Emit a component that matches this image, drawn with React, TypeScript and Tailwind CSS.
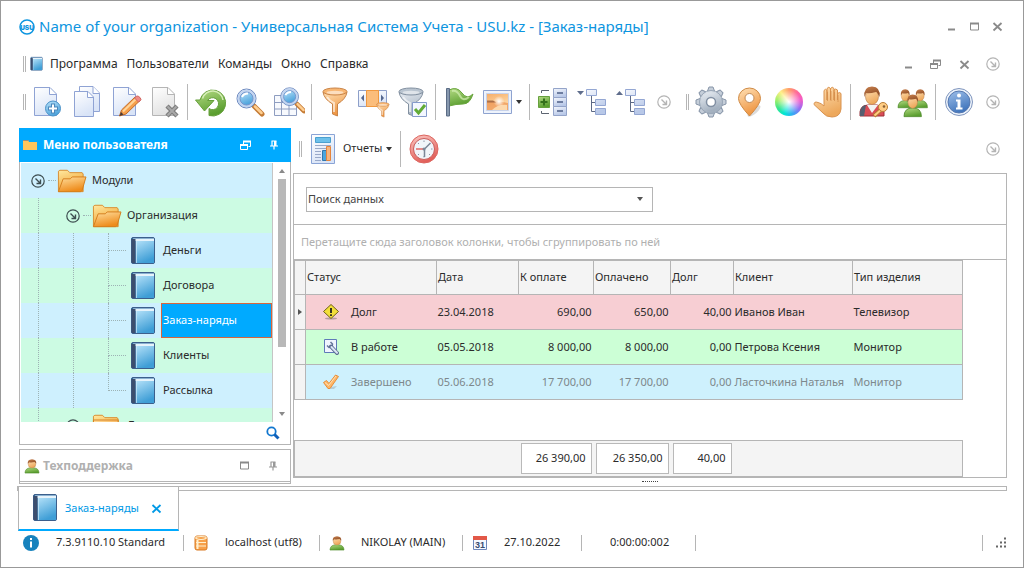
import type { ReactNode } from "react";

type IconProps = { className?: string };

/* Gradients shared by all the icons */
function IconDefs() {
  const grads: [string, string, string][] = [
    ["paper", "#ffffff", "#d9e4f7"],
    ["grayPaper", "#ffffff", "#e2e2e2"],
    ["plus", "#b9e2fa", "#4fa5dc"],
    ["green", "#b5db85", "#5a9e2f"],
    ["orange", "#ffe2b8", "#ee9440"],
    ["folderBack", "#ffe9a0", "#f0a030"],
    ["folderFront", "#ffe0a0", "#ee8c1c"],
    ["book", "#b2e0f8", "#3f9ed6"],
    ["steel", "#e8edf3", "#a3b0bf"],
    ["blue", "#9fc0ea", "#4377bd"],
    ["skin", "#ffe0b4", "#eda85c"],
    ["hair", "#c98250", "#8c4a22"],
    ["red", "#fcc9c4", "#e2605a"],
    ["glass", "#e8f4fd", "#a6d2f4"],
    ["sunset", "#f6ad68", "#ffe0b0"],
    ["node", "#f4f7fd", "#b8c8e8"],
  ];
  return (
    <svg width="0" height="0" className="absolute" aria-hidden="true">
      <defs>
        {grads.map(([id, from, to]) => (
          <linearGradient key={id} id={id} x1="0" y1="0" x2="0.4" y2="1">
            <stop offset="0" stopColor={from} />
            <stop offset="1" stopColor={to} />
          </linearGradient>
        ))}
        <radialGradient id="white">
          <stop offset="0" stopColor="#fff" />
          <stop offset="1" stopColor="#fff" stopOpacity="0" />
        </radialGradient>
      </defs>
    </svg>
  );
}

function Svg({ className = "size-8", box = 32, children }: IconProps & { box?: number; children: ReactNode }) {
  return (
    <svg viewBox={`0 0 ${box} ${box}`} className={`shrink-0 ${className}`} fill="none" aria-hidden="true">
      {children}
    </svg>
  );
}

const Page = ({ fill = "url(#paper)", stroke = "#8fa3d4" }) => (
  <>
    <path d="M3.5 1.500H19L25.500 8V29.500H3.500Z" fill={fill} stroke={stroke} />
    <path d="M18.500 2V8.500H25" fill="#fff" stroke={stroke} />
  </>
);

const NewIcon = () => (
  <Svg>
    <g transform="translate(-1 0)">
      <Page />
    </g>
    <circle cx="21" cy="22.500" r="7.500" fill="url(#plus)" stroke="#4b92c8" />
    <path d="M21 17.500V27.500M16 22.500H26" stroke="#4b86ba" strokeWidth="4" />
    <path d="M21 18.500V26.500M17 22.500H25" stroke="#fff" strokeWidth="2" />
  </Svg>
);

const CopyIcon = () => (
  <Svg>
    <path d="M8.500 .500H22L28.500 7V25.500H8.500Z" fill="url(#paper)" stroke="#8fa3d4" />
    <path d="M22 .500V7.500H28.500" fill="#fff" stroke="#8fa3d4" />
    <path d="M3.500 5.500H17L22.500 11V30.500H3.500Z" fill="url(#paper)" stroke="#8fa3d4" />
    <path d="M16.500 6V11.500H22" fill="#fff" stroke="#8fa3d4" />
  </Svg>
);

const EditIcon = () => (
  <Svg>
    <Page />
    <path d="M9.500 30L11.500 24L25 11L29.500 15L16 28Z" fill="#f6a04c" stroke="#c26c28" />
    <path d="M13 25.500L26.500 12.500" stroke="#ffd59a" strokeWidth="2" />
    <path d="M24.500 12L26.500 10Q28 9.500 30 11.500T30 15L28.500 16Z" fill="#f08a86" stroke="#cf6560" />
    <path d="M9.500 30L11 26L13.500 28.500Z" fill="#4b3b36" />
  </Svg>
);

const DeleteIcon = () => (
  <Svg>
    <Page fill="url(#grayPaper)" stroke="#b5b5b5" />
    <path d="M18 20L28 30M28 20L18 30" stroke="#7e7e7e" strokeWidth="4.500" />
    <path d="M18.500 20.500L27.500 29.500M27.500 20.500L18.500 29.500" stroke="#a9a9a9" strokeWidth="2" />
  </Svg>
);

const RefreshIcon = () => (
  <Svg>
    <path
      d="M5 14A13 13 0 1 1 14 29.500V22.500A6 6 0 1 0 12.500 14.500H19L9.500 25L.500 14Z"
      fill="url(#green)"
      stroke="#67a03c"
      strokeLinejoin="round"
    />
    <path d="M7.500 12.500A10.500 10.500 0 0 1 28 14" stroke="#d7efb8" strokeWidth="1.500" />
  </Svg>
);

const Glass = () => (
  <>
    <path d="M20 20L28 28" stroke="#c57b35" strokeWidth="5" strokeLinecap="round" />
    <path d="M21 20.500L27.500 27" stroke="#ffcf91" strokeWidth="2.500" strokeLinecap="round" />
    <circle cx="12.500" cy="12.500" r="9.500" fill="url(#glass)" stroke="#6b86bd" strokeWidth="1" />
    <circle cx="12.500" cy="12.500" r="8" stroke="#c3d4ef" strokeWidth="2" />
    <circle cx="12.500" cy="12.500" r="6.500" fill="url(#plus)" stroke="#7594cc" />
    <path d="M8 11Q9.500 7.500 14 7.500" stroke="#fff" strokeWidth="2" />
  </>
);

const SearchIcon = () => (
  <Svg>
    <Glass />
  </Svg>
);

const GridSearchIcon = () => (
  <Svg>
    <path d="M1.500 9.500H24.500V29.500H1.500Z" fill="#f7f9fd" />
    <path d="M1.500 9.500V29.500H23.500V18M1.500 16.500H24M1.500 23H24M8.500 9.500V29.500M16 9.500V29.500M1.500 9.500H8" stroke="#8e9dc0" />
    <g transform="translate(5 -1) scale(.93)">
      <Glass />
    </g>
  </Svg>
);

const Funnel = ({ fill = "url(#orange)", stroke = "#c98448", rim = "#f8b672" }) => (
  <>
    <path d="M4 6Q5 13 13.500 18V28L18.500 30V18Q27 13 28 6Z" fill={fill} stroke={stroke} />
    <ellipse cx="16" cy="5.500" rx="12" ry="3.500" fill={rim} stroke={stroke} />
    <ellipse cx="16" cy="6.500" rx="8.500" ry="1.800" fill="#fff" opacity=".55" />
    <path d="M8 11Q11 15.500 15 17V26" stroke="#fff" opacity=".6" strokeWidth="2" />
  </>
);

const FilterIcon = () => (
  <Svg>
    <Funnel />
  </Svg>
);

const ColumnFilterIcon = () => (
  <Svg>
    <path d="M.500 4.500H28.500V20.500H.500Z" fill="url(#paper)" stroke="#8d9fc9" />
    <path d="M8.500 4.500H20.500V20.500H8.500Z" fill="#fbbd7b" stroke="#f1993f" />
    <path d="M6 8.500V15.500L3 12ZM23 8.500V15.500L26 12Z" fill="#54678f" />
    <g transform="translate(16.500 15.500) scale(.52)">
      <Funnel />
    </g>
  </Svg>
);

const FilterCheckIcon = () => (
  <Svg>
    <g transform="translate(-2 0)">
      <Funnel fill="url(#steel)" stroke="#8290a0" rim="#b9c4d0" />
    </g>
    <path d="M15.500 16.500H29.500V30.500H15.500Z" fill="#f3f7ff" stroke="#859bcb" />
    <path d="M18 23L21.500 27L28 19" stroke="#62ab36" strokeWidth="3" />
  </Svg>
);

const FlagIcon = () => (
  <Svg>
    <path d="M6 4Q14 0 19 7T30 8Q27 18 20 18T6 20Z" fill="url(#green)" stroke="#69a53d" />
    <path d="M9 5Q14 4 17 10T26 11" stroke="#d4efb3" strokeWidth="2" opacity=".7" />
    <path d="M3.500 2.500H6.500V30H3.500Z" fill="#8798ae" stroke="#5b6c85" />
  </Svg>
);

const PictureIcon = () => (
  <Svg>
    <path d="M1.500 4.500H29.500V27.500H1.500Z" fill="#eef3fc" stroke="#8ea3d0" />
    <path d="M4.500 7.500H26.500V24.500H4.500Z" fill="url(#sunset)" stroke="#c7d2ea" />
    <path d="M5 16Q14 14 26 17V24H5Z" fill="#ec9350" opacity=".7" />
    <circle cx="17" cy="15.500" r="5.500" fill="url(#white)" />
    <path d="M10 24Q16 18 25 19V24Z" fill="#ffe5bd" opacity=".8" />
    <path d="M5 14.500H11L14 16.500H5Z" fill="#8c5236" opacity=".7" />
  </Svg>
);

const GroupIcon = () => (
  <Svg>
    <path d="M4.500 7V4.500H12M4.500 25V27.500H12" stroke="#5d6471" />
    {[2.5, 11.5, 20.5].map((y) => (
      <g key={y}>
        <path d={`M16.500 ${y}H29.500V${y + 9}H16.500Z`} fill="url(#node)" stroke="#94a4c9" />
        <path d={`M20 ${y + 4.5}H26`} stroke="#4c5e86" strokeWidth="1.500" />
      </g>
    ))}
    <path d="M1.500 10.500H12.500V21.500H1.500Z" fill="url(#green)" stroke="#67a13e" />
    <path d="M7 12.500V19.500M3.500 16H10.500" stroke="#35701c" strokeWidth="2" />
  </Svg>
);

const TreeIcon = ({ up = false }) => (
  <Svg>
    <path d={up ? "M1 9L4.500 5L8 9Z" : "M1 5L4.500 9L8 5Z"} fill="#5f6d8c" />
    <path d="M15.500 9V25.500H20M15.500 16.500H20" stroke="#5d6984" />
    <path d="M10.500 3.500H20.500V9.500H10.500ZM19.500 13.500H29.500V19.500H19.500ZM19.500 22.500H29.500V28.500H19.500Z" fill="url(#node)" stroke="#94a7d3" />
  </Svg>
);

const GearIcon = () => (
  <Svg>
    {Array.from({ length: 8 }, (_, i) => (
      <path
        key={i}
        d="M12.500 5L14 1H18L19.500 5Z"
        transform={`rotate(${i * 45} 16 16)`}
        fill="#c5ced9"
        stroke="#8795a8"
        strokeLinejoin="round"
      />
    ))}
    <circle cx="16" cy="16" r="11.500" fill="url(#steel)" stroke="#9ba8b8" />
    <circle cx="16" cy="16" r="9.500" fill="url(#steel)" />
    <circle cx="16" cy="16" r="4.500" fill="#fff" stroke="#8290a3" strokeWidth="1.500" />
  </Svg>
);

const PinIcon = () => (
  <Svg>
    <ellipse cx="20" cy="25" rx="8" ry="3" fill="#888" opacity=".3" transform="rotate(-40 20 25)" />
    <path d="M15.500 30Q4.500 18 4.500 12.500A11 10.500 0 0 1 26.500 12.500Q26.500 18 15.500 30Z" fill="url(#orange)" stroke="#cf8a45" />
    <circle cx="15.500" cy="12" r="4.500" fill="#fff" stroke="#c28a55" />
  </Svg>
);

const ColorIcon = () => (
  <Svg>
    <foreignObject x="2" y="2" width="28" height="28">
      <div className="size-7 rounded-full bg-[conic-gradient(#ff9c6a,#ff6a9a,#f25ac8,#9a6cf2,#3aa5f5,#00e6d8,#38e68a,#a5f06a,#fff08a,#ff9c6a)]" />
    </foreignObject>
    <circle cx="16" cy="16" r="12" fill="url(#white)" />
  </Svg>
);

const HandIcon = () => (
  <Svg>
    <path
      d="M12 18V4.500Q13.500 2 15 4.500V14V2.500Q16.800 0 18.500 2.500V14V2.500Q20.300 0 22 2.500V14V4Q23.500 2 25.500 4V14V7.500Q27.500 5.500 29 7.500V23Q28 31 20 31Q14 31 11 27L2 18.500Q2 15 6 16.500Q9 17 12 20Z"
      fill="url(#skin)"
      stroke="#d9924f"
    />
    <path d="M15.500 6V15M19 5V15M22.500 6V15M26 9V16" stroke="#d18b49" strokeWidth=".7" />
  </Svg>
);

const UserKeyIcon = () => (
  <Svg>
    <path d="M2 30Q1 19 10 19H19Q27 20 26 30Z" fill="#d94c56" stroke="#9f3038" />
    <path d="M9 19L14 27L20 19Z" fill="#f3f3f3" />
    <path d="M2 30Q1 20 8 19L6 30Z" fill="#565f70" />
    <ellipse cx="14" cy="10.500" rx="6.500" ry="8" fill="url(#skin)" stroke="#b57b47" strokeWidth=".6" />
    <path d="M6.500 11Q5 1 14 .500Q23 1 21.500 11Q19 6 18 6Q11 8 8 7Z" fill="url(#hair)" />
    <path d="M24.500 22.500L16 30" stroke="#b97a30" strokeWidth="4" />
    <path d="M24.500 22.500L16.500 29.500" stroke="#ffcd84" strokeWidth="2" />
    <circle cx="25" cy="21" r="4.500" fill="#ffcd84" stroke="#ba7e38" />
    <circle cx="26" cy="20.500" r="1.300" fill="#8b6036" />
  </Svg>
);

const Person = () => (
  <>
    <path d="M0 26Q0 16 10 16Q20 16 20 26Z" fill="url(#green)" stroke="#4f8c2c" />
    <ellipse cx="10" cy="9.500" rx="5.500" ry="7" fill="url(#skin)" stroke="#b57b47" strokeWidth=".5" />
    <path d="M4 9Q3 1 10 .500Q17 1 16 9L14 5.500Q9 7 6 6Z" fill="url(#hair)" />
  </>
);

const UsersIcon = () => (
  <Svg>
    <g transform="translate(1 3) scale(.72)">
      <Person />
    </g>
    <g transform="translate(16 3) scale(.72)">
      <Person />
    </g>
    <g transform="translate(7 8) scale(.87)">
      <Person />
    </g>
  </Svg>
);

const UserIcon = ({ className = "size-4" }: IconProps) => (
  <Svg className={className}>
    <g transform="translate(2 2) scale(1.400 1.080)">
      <Person />
    </g>
  </Svg>
);

const InfoIcon = () => (
  <Svg>
    <circle cx="16" cy="16" r="13.500" fill="#edf3fb" stroke="#7f95bd" />
    <circle cx="16" cy="16" r="11" fill="url(#blue)" stroke="#5678b0" />
    <circle cx="16" cy="9.500" r="2" fill="#fff" />
    <path d="M13 13.500H17.500V21.500H19.500V23.500H13V21.500H14.500V15.500H13Z" fill="#fff" />
  </Svg>
);

const ReportIcon = () => (
  <Svg>
    <path d="M4.500 1.500H27.500V30.500H4.500Z" fill="url(#paper)" stroke="#8aa4d6" />
    <path d="M8.500 4.500H23.500V9.500H8.500Z" fill="#6cc0ea" stroke="#4ba0cf" />
    <path d="M8 12.500H24M8 15.500H19M8 18.500H14M8 21.500H14M8 24.500H14M8 27.500H14" stroke="#99a9c9" />
    <path d="M15.500 17.500H19.500V27.500H15.500Z" fill="#4aa6dd" stroke="#3177ac" />
    <path d="M19.500 13.500H23.500V27.500H19.500Z" fill="#f7b57c" stroke="#e4843d" />
  </Svg>
);

const ClockIcon = () => (
  <Svg>
    <circle cx="16" cy="16" r="14" fill="url(#red)" stroke="#dc6660" />
    <circle cx="16" cy="16" r="10.500" fill="#f1f5fa" stroke="#c95d5b" />
    <path d="M16 7.500V9M16 23V24.500M23 16H24.500M10 10L11 11M22 22L21 21M10 22L11 21" stroke="#8d98aa" />
    <path d="M8 16H16" stroke="#e26764" strokeWidth="1.500" />
    <path d="M16.500 24V16L22.500 10" stroke="#7b8798" strokeWidth="1.500" />
    <circle cx="16" cy="16" r="1.500" fill="#7b8798" />
  </Svg>
);

const BookIcon = ({ className = "size-8" }: IconProps) => (
  <Svg className={className}>
    <rect x="5.500" y="2.500" width="23" height="26" rx="1.500" fill="#2e6ea6" stroke="#3c5f8c" />
    <path d="M7 3.500H28V6H8Z" fill="#e6f3fb" />
    <path d="M9.500 6H28V28H9.500Z" fill="url(#book)" />
    <path d="M5.500 4H9.500V28H6.500Q5.500 28 5.500 27Z" fill="#3c4e6e" />
    <path d="M10.500 6V28" stroke="#cdeafa" opacity=".7" />
  </Svg>
);

const FolderIcon = ({ closed = false }) => (
  <Svg>
    <g transform="translate(1 1) scale(.95)">
      <path d="M1.500 27V5.500L3 4.500H11L13.500 7H26.500L27.500 8.500V27Z" fill="url(#folderBack)" stroke="#d88b2e" />
      <path
        d={closed ? "M1.500 9.500H27.500V27H1.500Z" : "M1.500 27L6.500 13.500H14L16 11.500H30.500L26.500 25.500L25 27Z"}
        fill="url(#folderFront)"
        stroke="#d47d1c"
      />
    </g>
  </Svg>
);

const ArrowCircle = ({ className = "size-[14px] text-[#b4b4b4]" }: IconProps) => (
  <Svg box={14} className={className}>
    <circle cx="7" cy="7" r="6.200" stroke="currentColor" strokeWidth="1.200" />
    <path d="M4.500 4.500L9 9M9.500 5.500V9.500H5.500" stroke="currentColor" strokeWidth="1.400" />
  </Svg>
);

const MinIcon = () => (
  <Svg box={11} className="size-[11px]">
    <path d="M2 8.500H9" stroke="#8a8a8a" strokeWidth="2" />
  </Svg>
);
const MaxIcon = () => (
  <Svg box={11} className="size-[11px]">
    <path d="M1.500 2V9H9.500V2" stroke="#8a8a8a" />
    <path d="M1 2.500H10" stroke="#8a8a8a" strokeWidth="2" />
  </Svg>
);
const RestoreIcon = ({ className = "size-[11px] text-[#8a8a8a]" }: IconProps) => (
  <Svg box={11} className={className}>
    <path d="M3.500 4V1.500H10.500V6.500H8.500M.500 5V9.500H7.500V5" stroke="currentColor" />
    <path d="M3 1.500H11M0 5H8" stroke="currentColor" strokeWidth="2" />
  </Svg>
);
const CloseIcon = ({ className = "size-[11px] text-[#8a8a8a]" }: IconProps) => (
  <Svg box={11} className={className}>
    <path d="M1.500 2L9.500 9.500M9.500 2L1.500 9.500" stroke="currentColor" strokeWidth="1.800" />
  </Svg>
);
const TackIcon = ({ className = "" }: IconProps) => (
  <Svg box={10} className={`size-[10px] ${className}`}>
    <path d="M2.500 1H7.500M3 1V5.500M1 6H9M5 6V9.500" stroke="currentColor" strokeWidth="1.200" />
    <path d="M5 1H7.500V6H5Z" fill="currentColor" />
  </Svg>
);

const Caret = ({ className = "text-[#333]" }: IconProps) => (
  <svg viewBox="0 0 6 4" className={`h-1 w-[6px] shrink-0 ${className}`} aria-hidden="true">
    <path d="M0 0H6L3 4Z" fill="currentColor" />
  </svg>
);

const Grip = () => <span className="mr-[2px] h-4 w-[3px] shrink-0 border-x border-[#b5b5b5]" />;
const Divider = () => <span className="mx-[3px] h-9 w-px shrink-0 bg-[#b8b8b8]" />;

function Tool({ label, children }: { label: string; children: ReactNode }) {
  return (
    <button aria-label={label} className="flex h-9 w-[39px] shrink-0 items-center justify-center">
      {children}
    </button>
  );
}

const MoreButton = () => (
  <button aria-label="Настроить панель" className="flex h-9 w-7 shrink-0 items-center justify-center">
    <ArrowCircle />
  </button>
);

function TitleBar() {
  return (
    <header className="flex h-[51px] items-center pr-1">
      <Svg className="size-4">
        <circle cx="16" cy="16" r="14" stroke="#0d95e0" strokeWidth="3" />
        <text
          x="16"
          y="21"
          textAnchor="middle"
          fontFamily="Inter, sans-serif"
          fontWeight="900"
          fontSize="13"
          fill="#0d95e0"
        >
          USU
        </text>
      </Svg>
      <h1 className="ml-1 text-[15px] whitespace-nowrap text-[#0d95e0]">
        Name of your organization - Универсальная Система Учета - USU.kz - [Заказ-наряды]
      </h1>
      <div className="ml-auto flex gap-3">
        <button aria-label="Свернуть"><MinIcon /></button>
        <button aria-label="Развернуть"><MaxIcon /></button>
        <button aria-label="Закрыть"><CloseIcon /></button>
      </div>
    </header>
  );
}

function MenuBar() {
  return (
    <nav className="flex h-6 items-center pl-1">
      <Grip />
      <BookIcon className="size-4" />
      <div className="ml-[6px] flex gap-[9px] text-[12px] text-[#2b2b2b]">
        {["Программа", "Пользователи", "Команды", "Окно", "Справка"].map((m) => (
          <button key={m}>{m}</button>
        ))}
      </div>
      <div className="ml-auto flex items-center">
        <button aria-label="Свернуть окно" className="mr-4"><MinIcon /></button>
        <button aria-label="Восстановить окно" className="mr-[18px]"><RestoreIcon /></button>
        <button aria-label="Закрыть окно" className="mr-[9px]"><CloseIcon /></button>
        <MoreButton />
      </div>
    </nav>
  );
}

function Toolbar() {
  return (
    <div className="flex h-[52px] items-center pl-1" role="toolbar">
      <Grip />
      <div className="flex items-center">
        <Tool label="Добавить"><NewIcon /></Tool>
        <Tool label="Копировать"><CopyIcon /></Tool>
        <Tool label="Изменить"><EditIcon /></Tool>
        <Tool label="Удалить"><DeleteIcon /></Tool>
        <Divider />
        <Tool label="Обновить"><RefreshIcon /></Tool>
        <Tool label="Поиск"><SearchIcon /></Tool>
        <Tool label="Поиск в таблице"><GridSearchIcon /></Tool>
        <Divider />
        <Tool label="Фильтр"><FilterIcon /></Tool>
        <Tool label="Фильтр по колонке"><ColumnFilterIcon /></Tool>
        <Tool label="Применить фильтр"><FilterCheckIcon /></Tool>
        <Divider />
        <Tool label="Флаг"><FlagIcon /></Tool>
        <button aria-label="Изображение" className="flex h-9 w-12 items-center gap-[2px] pl-1">
          <PictureIcon />
          <Caret />
        </button>
        <Divider />
        <Tool label="Группировка"><GroupIcon /></Tool>
        <Tool label="Развернуть все"><TreeIcon /></Tool>
        <Tool label="Свернуть все"><TreeIcon up /></Tool>
        <MoreButton />
      </div>
      <div className="ml-2 flex flex-1 items-center">
        <Grip />
        <Tool label="Настройки"><GearIcon /></Tool>
        <Tool label="Карта"><PinIcon /></Tool>
        <Tool label="Цвета"><ColorIcon /></Tool>
        <Tool label="Стоп"><HandIcon /></Tool>
        <Divider />
        <Tool label="Права доступа"><UserKeyIcon /></Tool>
        <Tool label="Пользователи"><UsersIcon /></Tool>
        <Divider />
        <Tool label="Информация"><InfoIcon /></Tool>
        <div className="ml-auto flex">
          <MoreButton />
        </div>
      </div>
    </div>
  );
}

const Rail = () => (
  <span className="flex w-[35px] shrink-0 self-stretch pl-[17px]">
    <span className="border-l border-dotted border-[#9db3b5]" />
  </span>
);

const Elbow = ({ last = false }) => (
  <span className="flex w-[35px] shrink-0 flex-col self-stretch pl-[17px]">
    <span className="flex-1 border-b border-l border-dotted border-[#9db3b5]" />
    <span className={last ? "flex-1" : "flex-1 border-l border-dotted border-[#9db3b5]"} />
  </span>
);

const Expander = () => (
  <span className="flex w-[35px] shrink-0 items-center justify-end">
    <ArrowCircle className="size-[14px] text-[#3d4d50]" />
    <span className="ml-[3px] w-[8px] border-t border-dotted border-[#9db3b5]" />
  </span>
);

const leaves = ["Деньги", "Договора", "Заказ-наряды", "Клиенты", "Рассылка"];

function TreePanel() {
  return (
    <section className="flex min-h-0 flex-1 flex-col border border-t-0 border-[#b5b5b5]">
      <header className="-mx-px flex h-[34px] shrink-0 items-center bg-[#00aaff] pr-3 pl-1 text-white">
        <svg viewBox="0 0 14 10" className="h-[10px] w-[14px]" aria-hidden="true">
          <path d="M0 0H5L6 2H14V10H0Z" fill="#ffc65c" />
          <path d="M0 0H5L6 1H0Z" fill="#a08c78" />
        </svg>
        <h2 className="ml-[6px] text-[12px] font-bold">Меню пользователя</h2>
        <button aria-label="Восстановить" className="ml-auto"><RestoreIcon className="size-[11px] text-white" /></button>
        <button aria-label="Закрепить" className="ml-[18px]"><TackIcon /></button>
      </header>
      <div className="mt-px flex min-h-0 flex-1 pl-px">
        <ul className="min-w-0 flex-1 overflow-hidden border-r border-[#c5c5c5] text-[11px] text-[#2b2b2b]">
          <li className="flex h-[35px] items-center bg-[#cef0fe]">
            <Expander />
            <FolderIcon />
            <span className="ml-1">Модули</span>
          </li>
          <li className="flex h-[35px] items-center bg-[#ccfbe3]">
            <Rail />
            <Expander />
            <FolderIcon />
            <span className="ml-1">Организация</span>
          </li>
          {leaves.map((name, i) => (
            <li key={name} className={`flex h-[35px] items-center ${i % 2 ? "bg-[#ccfbe3]" : "bg-[#cef0fe]"}`}>
              <Rail />
              <Rail />
              <Elbow last={i === leaves.length - 1} />
              <BookIcon className="mr-[3px] size-8" />
              <a
                href="#"
                className={
                  name === "Заказ-наряды"
                    ? "flex h-[35px] flex-1 items-center border border-[#d9653c] bg-[#00aaff] pl-px text-white"
                    : "flex h-[35px] flex-1 items-center pl-[2px]"
                }
              >
                {name}
              </a>
            </li>
          ))}
          <li className="flex h-[35px] items-center bg-[#ccfbe3]">
            <Rail />
            <Expander />
            <FolderIcon closed />
            <span className="ml-1">Деньги</span>
          </li>
        </ul>
        <div className="flex w-[17px] shrink-0 flex-col items-center py-[6px]">
          <Caret className="rotate-180 text-[#8a8a8a]" />
          <div className="mt-[6px] h-[168px] w-2 bg-[#b8b8b8]" />
          <Caret className="mt-auto text-[#8a8a8a]" />
        </div>
      </div>
      <footer className="flex h-[22px] shrink-0 items-center justify-end pr-[10px]">
        <button aria-label="Поиск по меню">
          <Svg box={14} className="size-[14px]">
            <circle cx="5.500" cy="5.500" r="4.200" stroke="#1277cf" strokeWidth="1.800" />
            <path d="M8.500 8.500L12.500 12.500" stroke="#0f5fb8" strokeWidth="3" />
          </Svg>
        </button>
      </footer>
    </section>
  );
}

function SupportPanel() {
  return (
    <section className="mt-1 flex h-[35px] shrink-0 flex-col border border-[#b5b5b5] pb-px">
      <header className="flex flex-1 items-center border-b border-[#b5b5b5] pr-3 pl-1 text-[#999]">
        <UserIcon />
        <h2 className="ml-[3px] text-[12px] font-bold text-[#b0b0b0]">Техподдержка</h2>
        <button aria-label="Развернуть" className="ml-auto"><MaxIcon /></button>
        <button aria-label="Закрепить" className="ml-[18px]"><TackIcon /></button>
      </header>
    </section>
  );
}

const WarnIcon = () => (
  <Svg box={16} className="size-4">
    <ellipse cx="8" cy="14.500" rx="6" ry="1" fill="#555" opacity=".4" />
    <path d="M8 .500L15.500 7.500L8 14.500L.500 7.500Z" fill="#f3df3a" stroke="#6f6318" />
    <path d="M8 4V9M8 10.200V12" stroke="#222" strokeWidth="1.800" />
  </Svg>
);
const WrenchIcon = () => (
  <Svg box={16} className="size-4">
    <path d="M1.500 .500H13.500V13.500H1.500Z" fill="#f0f5ff" stroke="#5f7ab8" />
    <path d="M4 6.500L6 8.500L9 8L9.500 5L7.500 3" stroke="#66779a" strokeWidth="1.500" />
    <path d="M8 7.500L14 14" stroke="#5b6d92" strokeWidth="4" strokeLinecap="round" />
    <path d="M8.500 8L14 13.800" stroke="#dbe5f6" strokeWidth="2" strokeLinecap="round" />
  </Svg>
);
const DoneIcon = () => (
  <Svg box={16} className="size-4">
    <path d="M4 13.500L14 12L11 15H5Z" fill="#a4b6bd" opacity=".6" />
    <path d="M.500 8.500L3.500 6.500L6 9.500L12.500 1L15.500 2.500L7 14.500H5Z" fill="#fdb667" stroke="#e88e39" />
    <path d="M2 8.500L5.500 11.500L13 2" stroke="#ffe2b5" />
  </Svg>
);

const columns = ["Статус", "Дата", "К оплате", "Оплачено", "Долг", "Клиент", "Тип изделия"];

const orders = [
  { icon: <WarnIcon />, tone: "bg-[#f7ced3]", cells: ["Долг", "23.04.2018", "690,00", "650,00", "40,00", "Иванов Иван", "Телевизор"] },
  { icon: <WrenchIcon />, tone: "bg-[#ccffd6]", cells: ["В работе", "05.05.2018", "8 000,00", "8 000,00", "0,00", "Петрова Ксения", "Монитор"] },
  {
    icon: <DoneIcon />,
    tone: "bg-[#cef1fd] text-[#7d888c]",
    cells: ["Завершено", "05.06.2018", "17 700,00", "17 700,00", "0,00", "Ласточкина Наталья", "Монитор"],
  },
];

const Columns = () => (
  <colgroup>
    <col className="w-[11px]" />
    <col className="w-[131px]" />
    <col className="w-[82px]" />
    <col className="w-[75px]" />
    <col className="w-[77px]" />
    <col className="w-[63px]" />
    <col className="w-[119px]" />
    <col className="w-[110px]" />
  </colgroup>
);

function OrdersTable() {
  return (
    <table className="w-[669px] table-fixed border-collapse">
      <Columns />
      <thead>
        <tr className="h-[34px] bg-[#f4f4f4]">
          <th className="border border-[#b5b5b5]" />
          {columns.map((c) => (
            <th key={c} className="border border-[#b5b5b5] pl-px text-left font-normal">
              {c}
            </th>
          ))}
        </tr>
      </thead>
      <tbody>
        {orders.map((row, i) => (
          <tr key={row.cells[0]} className={`h-[35px] border border-[#b5b5b5] ${row.tone}`}>
            <td className="border border-[#b5b5b5] bg-[#f4f4f4]">
              {i === 0 && <Caret className="mx-auto -rotate-90 text-[#555]" />}
            </td>
            {row.cells.map((cell, j) => (
              <td key={j} className={j > 1 && j < 5 ? "pr-[2px] text-right whitespace-nowrap" : "pl-px whitespace-nowrap"}>
                {j === 0 ? (
                  <span className="flex items-center gap-3 pl-4">
                    {row.icon}
                    {cell}
                  </span>
                ) : (
                  cell
                )}
              </td>
            ))}
          </tr>
        ))}
      </tbody>
    </table>
  );
}

function Totals() {
  return (
    <table className="w-[669px] table-fixed border border-[#b5b5b5] bg-[#f4f4f4]">
      <Columns />
      <tbody>
        <tr className="h-[36px]">
          <td colSpan={3} />
          {["26 390,00", "26 350,00", "40,00"].map((t) => (
            <td key={t} className="px-[2px]">
              <div className="flex h-[31px] items-center justify-end border border-[#b9b9b9] bg-white pr-[5px] whitespace-nowrap">{t}</div>
            </td>
          ))}
          <td colSpan={2} />
        </tr>
      </tbody>
    </table>
  );
}

function Workspace() {
  return (
    <main className="flex min-w-0 flex-1 flex-col">
      <div className="mb-1 flex h-[41px] shrink-0 items-center pl-[6px]">
        <Grip />
        <button className="flex items-center gap-1 pl-[3px] text-[11px] text-[#2b2b2b]">
          <ReportIcon />
          Отчеты
          <Caret />
        </button>
        <span className="ml-[5px] flex items-center">
          <Divider />
          <Tool label="Время"><ClockIcon /></Tool>
        </span>
        <div className="ml-auto flex">
          <MoreButton />
        </div>
      </div>
      <div className="flex min-h-0 flex-1 flex-col border border-[#b5b5b5] text-[11px] text-[#2b2b2b]">
        <div className="flex h-[51px] shrink-0 items-center border-b border-[#b5b5b5] px-3">
          <div className="relative flex w-[347px] items-center text-[#444]">
            <select
              aria-label="Поиск данных"
              className="h-[25px] w-full appearance-none border border-[#b5b5b5] bg-white px-px outline-none"
            >
              <option>Поиск данных</option>
            </select>
            <Caret className="pointer-events-none absolute right-[10px] text-[#555]" />
          </div>
        </div>
        <p className="flex h-[35px] shrink-0 items-center border-b border-[#b5b5b5] pl-[7px] text-[#b0b0b0]">
          Перетащите сюда заголовок колонки, чтобы сгруппировать по ней
        </p>
        <OrdersTable />
        <div className="mt-auto">
          <Totals />
        </div>
      </div>
      <div className="flex h-[6px] shrink-0 items-center justify-center">
        <span className="w-4 border-t border-dotted border-[#444]" />
      </div>
    </main>
  );
}

function OpenTabs() {
  return (
    <div className="-ml-[2px] shrink-0">
      <div className="mt-[2px] h-[5px] border border-[#b5b5b5]" />
      <div className="relative -mt-[5px] ml-[1px] flex h-[45px] w-[161px] items-center border border-b-2 border-[#b5b5b5] border-b-[#00aaff] bg-white pl-[9px] text-[11px] text-[#0099e6]">
        <BookIcon />
        <a href="#" className="ml-[5px]">Заказ-наряды</a>
        <button aria-label="Закрыть вкладку" className="mr-4 ml-auto">
          <CloseIcon className="size-[11px] text-[#0099e6]" />
        </button>
      </div>
    </div>
  );
}

const StatusInfoIcon = () => (
  <Svg box={16} className="size-4">
    <circle cx="8" cy="8" r="8" fill="#1782bd" />
    <path d="M8 3V5M8 6.500V12.500" stroke="#fff" strokeWidth="2" />
  </Svg>
);
const DatabaseIcon = () => (
  <Svg box={16} className="size-4">
    <rect x="2" y="1" width="12" height="14" rx="2" fill="#f7a04a" stroke="#d97b24" />
    <path d="M3 3.500Q8 5.500 13 3.500V2Q8 1 3 2ZM3 7.500H13M3 11H13" stroke="#fff0cf" strokeWidth="1.200" />
    <path d="M4.500 5V14" stroke="#fff0cf" strokeWidth="2" />
  </Svg>
);
const CalendarIcon = () => (
  <Svg box={16} className="size-4">
    <path d="M1.500 1.500H14.500V14.500H1.500Z" fill="#f4f8ff" stroke="#6d87bb" />
    <path d="M1 1H15V5H1Z" fill="#e25848" />
    <text x="8" y="13" textAnchor="middle" fontSize="9" fontWeight="700" fontFamily="Liberation Sans, sans-serif" fill="#374b70">31</text>
  </Svg>
);

const StatusLine = () => <span className="h-4 w-px shrink-0 bg-[#b5b5b5]" />;

function StatusBar() {
  return (
    <footer className="flex h-[23px] shrink-0 items-center pl-1 text-[11px] whitespace-nowrap text-[#2b2b2b]">
      <div className="flex w-[160px] items-center gap-[17px]">
        <StatusInfoIcon />
        7.3.9110.10 Standard
      </div>
      <StatusLine />
      <div className="flex w-[135px] items-center gap-4 pl-[9px]">
        <DatabaseIcon />
        localhost (utf8)
      </div>
      <StatusLine />
      <div className="flex w-[142px] items-center gap-4 pl-[9px]">
        <UserIcon />
        NIKOLAY (MAIN)
      </div>
      <StatusLine />
      <div className="flex w-[118px] items-center gap-4 pl-[9px]">
        <CalendarIcon />
        27.10.2022
      </div>
      <StatusLine />
      <div className="w-[113px] pl-7">0:00:00:002</div>
      <StatusLine />
      <div className="ml-auto flex items-center gap-3 pr-px">
        <StatusLine />
        <Svg box={11} className="size-[11px]">
          <path d="M9 1.500H11M5 5.500H7M9 5.500H11M1 9.500H3M5 9.500H7M9 9.500H11" stroke="#666" strokeWidth="2" />
        </Svg>
      </div>
    </footer>
  );
}

export default function App() {
  return (
    <div className="flex h-screen min-h-[480px] flex-col border border-[#999] bg-white pr-4 pb-[13px] pl-[18px] font-['Noto_Sans',sans-serif]">
      <IconDefs />
      <TitleBar />
      <MenuBar />
      <Toolbar />
      <div className="flex min-h-0 flex-1 gap-[2px]">
        <aside className="flex w-[272px] shrink-0 flex-col">
          <TreePanel />
          <SupportPanel />
        </aside>
        <Workspace />
      </div>
      <OpenTabs />
      <StatusBar />
    </div>
  );
}
